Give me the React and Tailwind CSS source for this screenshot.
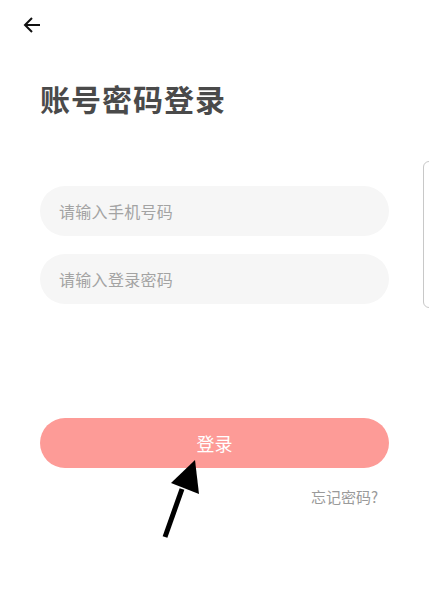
import React from "react";

export default function App() {
  return (
    <div
      className="relative w-[429px] h-[592px] bg-white overflow-hidden"
      style={{ fontFamily: '"Noto Sans CJK SC", "Noto Sans", sans-serif' }}
    >
      <div className="pt-[16px] pl-[23px] h-[34px]">
        <svg width="18" height="18" viewBox="0 0 18 18" fill="none">
          <path d="M17 9H2M9 2L2 9l7 7" stroke="#111" strokeWidth="2" strokeLinecap="butt" strokeLinejoin="miter" />
        </svg>
      </div>
      <div className="px-[40px]">
        <h1 className="mt-[44px] text-[30px] leading-[40px] font-bold text-[#4a4a4a] tracking-[1px]">
          账号密码登录
        </h1>
        <div className="mt-[68px] flex flex-col gap-[18px]">
          <div className="h-[50px] rounded-full bg-[#f6f6f6] flex items-center pl-[19px] text-[16px] tracking-[0.3px] text-[#a3a3a3]">
            请输入手机号码
          </div>
          <div className="h-[50px] rounded-full bg-[#f6f6f6] flex items-center pl-[19px] text-[16px] tracking-[0.3px] text-[#a3a3a3]">
            请输入登录密码
          </div>
        </div>
        <div className="mt-[114px] h-[50px] rounded-full bg-[#fd9b97] flex items-center justify-center text-[18px] text-white">
          登录
        </div>
        <div className="mt-[20px] flex justify-end pr-[11px] text-[15px] leading-[18px] text-[#9a9a9a]">
          忘记密码?
        </div>
      </div>
      <div className="absolute left-[423px] top-[161px] w-[20px] h-[147px] border border-[#c8c8c8] rounded-l-[6px]" />
      <svg className="absolute left-0 top-0" width="429" height="592" viewBox="0 0 429 592">
        <line x1="165" y1="537" x2="182" y2="489" stroke="#000" strokeWidth="5" />
        <polygon points="195,460 171,483 199,494" fill="#000" />
      </svg>
    </div>
  );
}
